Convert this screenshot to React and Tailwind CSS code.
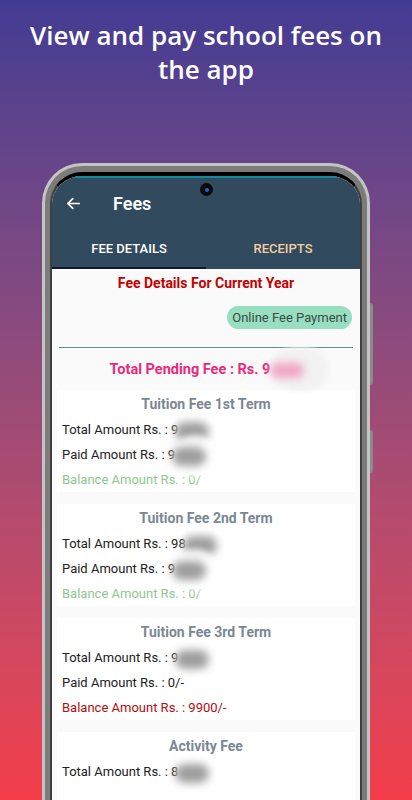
import React from "react";

function Blob({ w = 34 }) {
  return (
    <span className="relative inline-block align-middle ml-[-3px] h-[14px]" style={{ width: w }}>
      <span className="absolute left-[2px] top-[-14px] w-[42px] h-[42px] rounded-full bg-white/80 blur-[3px]" />
      <span className="absolute left-0 top-[-2px] h-[19px] rounded-full bg-[#9e9e9e] blur-[4px]" style={{ width: w }} />
    </span>
  );
}

function Row({ children, className = "text-[#222]" }) {
  return (
    <div className={`h-[25px] leading-[25px] pl-[5px] text-[13px] whitespace-nowrap ${className}`}>{children}</div>
  );
}

function Card({ title, children, extra = "" }) {
  return (
    <div className={`mx-[5px] bg-white pt-[5px] mb-[12px] ${extra}`}>
      <div className="relative z-10 h-[18px] leading-[18px] text-center text-[14px] font-bold text-[#7b8794] mb-[4px]">{title}</div>
      {children}
    </div>
  );
}

export default function App() {
  return (
    <div
      className="relative w-[412px] h-[800px] overflow-hidden bg-gradient-to-b from-[#433b93] to-[#f43d4a]"
      style={{ fontFamily: "Roboto, 'Liberation Sans', sans-serif" }}
    >
      <div
        className="pt-[18px] text-center text-white text-[26px] leading-[34px] font-semibold"
        style={{ fontFamily: "'Open Sans', sans-serif" }}
      >
        View and pay school fees on
        <br />
        the app
      </div>

      <div className="relative ml-[42px] mt-[77px] w-[328px] rounded-t-[40px] border-[3px] border-b-0 border-[#c4c4c4] bg-[#7c7c7c] px-[5px] pt-[6px]">
        <div className="absolute right-[-6px] top-[137px] w-[3px] h-[82px] rounded-r bg-[#8a8a8a]" />
        <div className="absolute right-[-6px] top-[264px] w-[3px] h-[43px] rounded-r bg-[#8a8a8a]" />
        <div className="relative rounded-t-[32px] border-t-[4px] border-x-[2px] border-black border-x-[#3f3f3f] overflow-hidden bg-[#fafafa] h-[700px]">
          <div className="bg-[#324a5e] border-t-2 border-[#128c9a]">
            <div className="relative h-[50px] flex items-center">
              <div className="absolute left-[148px] top-[5px] w-[13px] h-[13px] rounded-full bg-[#0a0a0a] flex items-center justify-center">
                <div className="w-[4px] h-[4px] rounded-full bg-[#2a5cd8]" />
              </div>
              <svg className="ml-[13px]" width="17" height="17" viewBox="0 0 24 24" fill="none" stroke="white" strokeWidth="2.4" strokeLinecap="round" strokeLinejoin="round">
                <path d="M20 12H4M11 5l-7 7 7 7" />
              </svg>
              <span className="ml-[31px] text-white text-[18px] font-semibold">Fees</span>
            </div>
            <div className="relative flex h-[41px] items-center text-[13px] font-medium">
              <div className="w-1/2 text-center text-white">FEE DETAILS</div>
              <div className="w-1/2 text-center text-[#f2cfa2]">RECEIPTS</div>
              <div className="absolute left-0 bottom-0 w-1/2 h-[2px] bg-[#0f1b33]" />
            </div>
          </div>

          <div className="flex flex-col">
            <div className="pt-[5px] h-[23px] leading-[18px] text-center text-[14px] font-bold text-[#c40000]">
              Fee Details For Current Year
            </div>
            <div className="self-end mr-[8px] mt-[14px] h-[23px] px-[5px] rounded-full bg-[#98dfc1] text-[13px] leading-[23px] text-[#3b4a45]">
              Online Fee Payment
            </div>
            <div className="mx-[7px] mt-[18px] h-px bg-[#5f8e8f]" />
            <div className="mt-[12px] h-[20px] leading-[20px] text-center text-[14.5px] font-bold text-[#ea2a7d] whitespace-nowrap">
              Total Pending Fee : Rs. 9
              <span className="relative inline-block align-middle ml-[-2px] w-[34px] h-[14px]">
                <span className="absolute left-[4px] top-[-16px] w-[56px] h-[44px] rounded-full bg-[#f2f2f2] blur-[2px]" />
                <span className="absolute left-[2px] top-0 w-[34px] h-[15px] rounded-full bg-[#f0a4c4] blur-[4px]" />
              </span>
            </div>
            <div className="mt-[10px]">
              <Card title="Tuition Fee 1st Term">
                <Row>Total Amount Rs. : 9<Blob /></Row>
                <Row>Paid Amount Rs. : 9<Blob /></Row>
                <Row className="text-[#8dc98d]">Balance Amount Rs. : 0/</Row>
              </Card>
              <Card title="Tuition Fee 2nd Term">
                <Row>Total Amount Rs. : 98<Blob /></Row>
                <Row>Paid Amount Rs. : 9<Blob /></Row>
                <Row className="text-[#8dc98d]">Balance Amount Rs. : 0/</Row>
              </Card>
              <Card title="Tuition Fee 3rd Term">
                <Row>Total Amount Rs. : 9<Blob /></Row>
                <Row>Paid Amount Rs. : 0/-</Row>
                <Row className="text-[#b30c0c]">Balance Amount Rs. : 9900/-</Row>
              </Card>
              <Card title="Activity Fee" extra="pb-[16px]">
                <Row>Total Amount Rs. : 8<Blob /></Row>
              </Card>
            </div>
          </div>
        </div>
      </div>
    </div>
  );
}
